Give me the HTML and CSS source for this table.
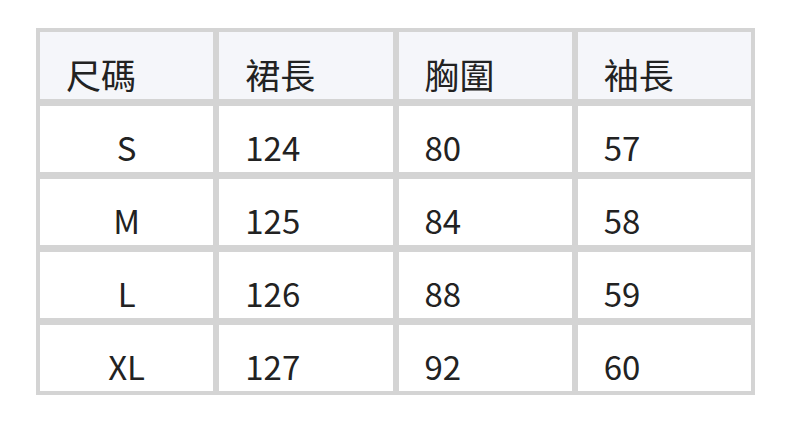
FILE: index.html
```html
<!DOCTYPE html>
<html lang="zh-Hant">
<head>
<meta charset="utf-8">
<link rel="stylesheet" href="styles.css">
</head>
<body>
<div class="table">
  <div class="cell head">尺碼</div>
  <div class="cell head">裙長</div>
  <div class="cell head">胸圍</div>
  <div class="cell head">袖長</div>

  <div class="cell center">S</div>
  <div class="cell">124</div>
  <div class="cell">80</div>
  <div class="cell">57</div>

  <div class="cell center">M</div>
  <div class="cell">125</div>
  <div class="cell">84</div>
  <div class="cell">58</div>

  <div class="cell center">L</div>
  <div class="cell">126</div>
  <div class="cell">88</div>
  <div class="cell">59</div>

  <div class="cell center">XL</div>
  <div class="cell">127</div>
  <div class="cell">92</div>
  <div class="cell">60</div>
</div>
</body>
</html>
```

FILE: styles.css
```css
html, body {
  margin: 0;
  padding: 0;
  background: #ffffff;
}
body {
  padding: 28px 0 0 36px;
  font-family: "Noto Sans CJK TC", "Noto Sans", sans-serif;
  color: #222222;
}
.table {
  width: 719px;
  box-sizing: border-box;
  background: #d4d4d4;
  padding: 4px;
  display: grid;
  grid-template-columns: repeat(4, 1fr);
  grid-template-rows: 67px repeat(4, 66px);
  column-gap: 6px;
  row-gap: 7px;
}
.cell {
  background: #ffffff;
  display: flex;
  align-items: flex-end;
  padding: 0 0 8px 26px;
  font-size: 33px;
  line-height: 1;
  box-sizing: border-box;
}
.cell.head {
  background: #f5f6fa;
  font-size: 35px;
  padding-bottom: 8px;
}
.cell.center {
  justify-content: center;
  padding-left: 0;
}
```
